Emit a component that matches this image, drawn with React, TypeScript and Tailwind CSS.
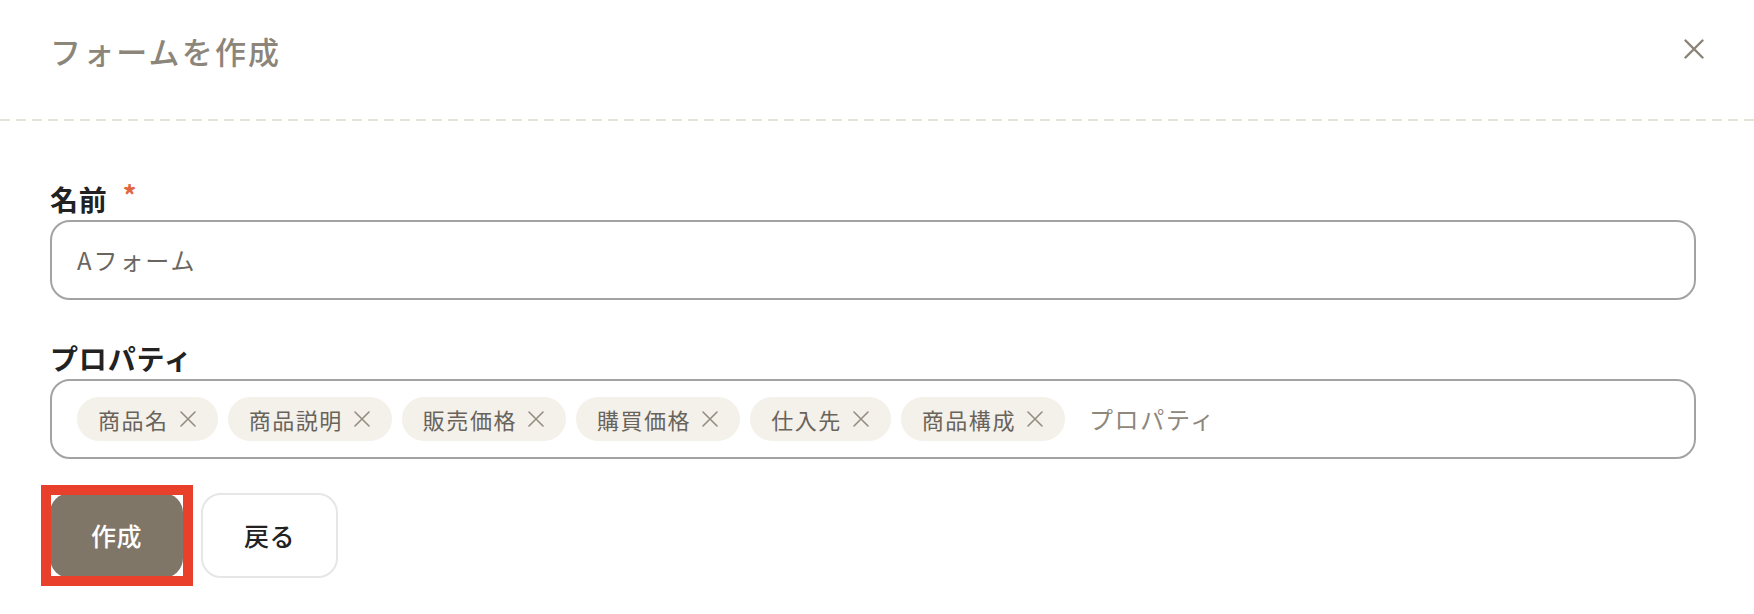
const properties = ['商品名', '商品説明', '販売価格', '購買価格', '仕入先', '商品構成']

function Chip({ label }: { label: string }) {
    return (
        <span className="flex h-[44px] items-center gap-[11px] rounded-full bg-[#f4f0ea] pl-[21px] pr-[22px] text-[22px] leading-none tracking-[0.07em] text-[#68635b]">
            {label}
            <svg width="16" height="16" viewBox="0 0 16 16" fill="none" stroke="#938d82" strokeWidth="1.6" strokeLinecap="round">
                <path d="M1 1L15 15M15 1L1 15" />
            </svg>
        </span>
    )
}

export default function App() {
    return (
        <div className="h-[614px] w-full bg-white font-['Noto_Sans_CJK_JP','Noto_Sans',sans-serif]">
            <div className="flex h-[119px] items-start justify-between pl-[50px] pr-[50px] pt-[27px]">
                <h2 className="text-[31px] font-medium leading-[48px] tracking-[0.07em] text-[#8c857a]">フォームを作成</h2>
                <button className="mt-[12px] text-[#8a8477]">
                    <svg width="20" height="20" viewBox="0 0 20 20" fill="none" stroke="currentColor" strokeWidth="2.4" strokeLinecap="round">
                        <path d="M1.5 1.5L18.5 18.5M18.5 1.5L1.5 18.5" />
                    </svg>
                </button>
            </div>
            <div className="h-[2px] bg-[linear-gradient(to_right,#e6e2da_10px,transparent_10px)] bg-[length:16px_2px]" />

            <div className="pl-[50px] pr-[58px] pt-[60px]">
                <label className="flex items-start text-[28px] font-bold leading-[36px] tracking-[0.03em] text-[#222]">
                    名前
                    <span className="ml-[15px] text-[27px] font-bold leading-[28px] text-[#e2653f]">*</span>
                </label>
                <div className="mt-[3px] flex h-[80px] items-center rounded-[20px] border-2 border-[#a3a3a3] pl-[25px] text-[24px] tracking-[0.08em] text-[#6a665f]">
                    Aフォーム
                </div>

                <label className="mt-[40px] block text-[28px] font-bold leading-[36px] tracking-[0.03em] text-[#222]">プロパティ</label>
                <div className="mt-[3px] flex h-[80px] items-center gap-[10px] rounded-[20px] border-2 border-[#a3a3a3] pl-[25px]">
                    {properties.map((p) => (
                        <Chip key={p} label={p} />
                    ))}
                    <span className="ml-[14px] text-[24px] tracking-[0.07em] text-[#8e877b]">プロパティ</span>
                </div>

                <div className="mt-[34px] flex gap-[18px]">
                    <div className="relative">
                        <button className="flex h-[85px] w-[133px] items-center justify-center rounded-[20px] bg-[#807667] text-[25px] font-medium tracking-[0.02em] text-white">
                            作成
                        </button>
                        <div className="pointer-events-none absolute -bottom-[8px] -left-[9px] -right-[10px] -top-[8px] border-[10px] border-[#e8402a]" />
                    </div>
                    <button className="flex h-[85px] w-[137px] items-center justify-center rounded-[20px] border-2 border-[#e6e6e6] bg-white text-[25px] font-medium tracking-[0.02em] text-[#222]">
                        戻る
                    </button>
                </div>
            </div>
        </div>
    )
}
